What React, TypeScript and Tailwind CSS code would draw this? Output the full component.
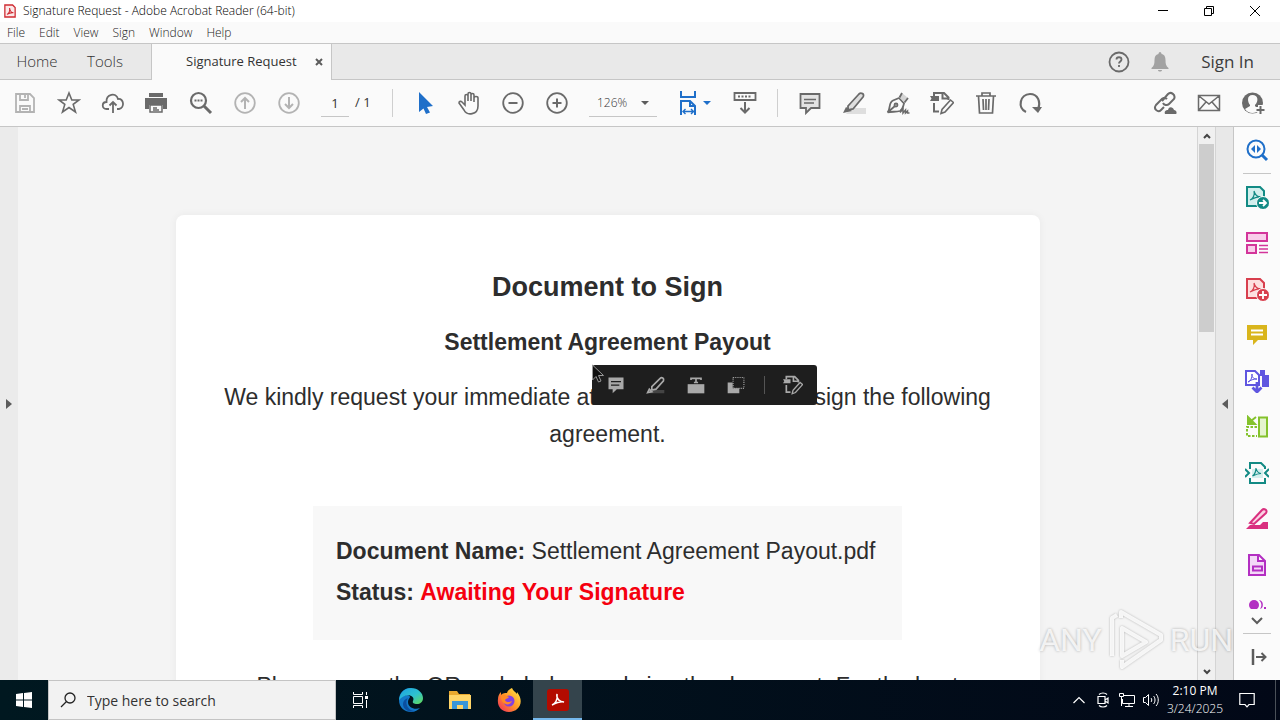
import { useState } from 'react'
import type { ReactNode } from 'react'

type IconProps = { children: ReactNode; className?: string }

function Icon({ children, className = 'h-6 w-6 text-[#6a6a6a]' }: IconProps) {
  return (
    <svg
      viewBox="0 0 24 24"
      fill="none"
      stroke="currentColor"
      strokeWidth="1.8"
      className={`shrink-0 ${className}`}
      aria-hidden="true"
    >
      {children}
    </svg>
  )
}

function ToolButton({ label, icon }: { label: string; icon: ReactNode }) {
  return (
    <button type="button" aria-label={label} className="flex h-11 w-11 shrink-0 items-center justify-center">
      {icon}
    </button>
  )
}

const muted = 'h-6 w-6 text-[#b3b3b3]'
const blue = 'h-6 w-6 text-[#1f6fc9]'

const stampPath = (
  <>
    <path d="M4 5V2h10l4.500 4.500V9M12.500 2v5.500H18M4 12v8.500h5" strokeWidth="2" />
    <path d="M0 5h9v5H0l1.500-2.500z" fill="currentColor" stroke="none" />
    <path d="M11 22.500l1-4L20.500 9l3 2.500L15 21z" strokeWidth="1.600" />
  </>
)

const pdfMark = <path d="M7.500 15c2-1.500 3.500-4.500 3.500-8 .5 3 2 5 5 5.500-3 0-5.500 1-8.500 2.500z" strokeWidth="1.200" />

function TitleBar() {
  return (
    <header className="flex h-[22px] items-center bg-white pl-1">
      <svg viewBox="0 0 14 16" className="h-4 w-3" fill="none" aria-hidden="true">
        <path d="M1 1h9l3 3v11H1z" fill="#fbe9e9" stroke="#cf2b32" strokeWidth="1.500" />
        <path d="M3.500 12c2-1 3.500-4 3-7.500C7 8 8.500 10 11 10c-3-.5-5 .5-7.500 2z" stroke="#cf2b32" strokeWidth="1.200" />
      </svg>
      <h1 className="ml-[7px] text-[12px] leading-4 font-light text-black">Signature Request - Adobe Acrobat Reader (64-bit)</h1>
      <div className="ml-auto flex pr-[2px] text-black">
        <button type="button" aria-label="Minimize" className="flex h-[22px] w-[46px] items-center justify-center">
          <svg viewBox="0 0 12 12" className="h-3 w-3" stroke="currentColor"><path d="M1 5.500h10" /></svg>
        </button>
        <button type="button" aria-label="Restore" className="flex h-[22px] w-[46px] items-center justify-center">
          <svg viewBox="0 0 12 12" className="h-3 w-3" stroke="currentColor" fill="none">
            <path d="M1.500 3.500h7v7h-7zM3.500 3V1.500h7v7H9" />
          </svg>
        </button>
        <button type="button" aria-label="Close" className="flex h-[22px] w-[46px] items-center justify-center">
          <svg viewBox="0 0 12 12" className="h-3 w-3" stroke="currentColor"><path d="M1 1l10 10M11 1L1 11" /></svg>
        </button>
      </div>
    </header>
  )
}

function MenuBar() {
  return (
    <nav className="flex h-[22px] items-center gap-[14px] border-b border-[#c6c6c6] bg-[#fafafa] pl-[7px] text-[12px] leading-4 font-light text-[#222]">
      {['File', 'Edit', 'View', 'Sign', 'Window', 'Help'].map((m) => (
        <button key={m} type="button">{m}</button>
      ))}
    </nav>
  )
}

function TabBar() {
  return (
    <div className="flex h-9 items-stretch border-b border-[#c6c6c6] bg-[#e9e9e9] text-[#333]">
      <button type="button" className="w-[74px] text-[15px] font-light">Home</button>
      <button type="button" className="w-[62px] text-[15px] font-light">Tools</button>
      <div className="-mb-px ml-[15px] flex w-[181px] items-center border-x border-[#c6c6c6] bg-[#fafafa] pl-[34px] text-[13px] text-[#333]">
        <span className="whitespace-nowrap">Signature Request</span>
        <button type="button" aria-label="Close tab" className="mr-2 ml-auto">
          <svg viewBox="0 0 8 8" className="h-2 w-2" stroke="#5c5c5c" strokeWidth="2"><path d="M1 1l6 6M7 1L1 7" /></svg>
        </button>
      </div>
      <div className="ml-auto flex items-center pr-[26px]">
        <button type="button" aria-label="Help">
          <Icon>
            <circle cx="12" cy="12" r="9.500" />
            <path d="M9.500 9.500c0-3 5-3 5 0 0 2-2.500 2-2.500 4M12 15v2" />
          </Icon>
        </button>
        <button type="button" aria-label="Notifications" className="ml-[17px]">
          <Icon className="h-6 w-6 text-[#a2a2a2]">
            <path d="M12 2c1 0 1.500 1 1.500 2 3 .5 4 3 4 6 0 4 .5 6 3 8v1h-17v-1c2.500-2 3-4 3-8 0-3 1-5.500 4-6 0-1 .5-2 1.500-2zM10 20h4c0 2-4 2-4 0z" fill="currentColor" stroke="none" />
          </Icon>
        </button>
        <button type="button" className="ml-[29px] text-[17px] text-[#3c3c3c]">Sign In</button>
      </div>
    </div>
  )
}

function Divider() {
  return <div className="h-7 w-px shrink-0 bg-[#cfcfcf]" />
}

function Toolbar() {
  const [page, setPage] = useState('1')

  return (
    <div className="flex h-[47px] items-center border-b border-[#c6c6c6] bg-[#fafafa] pr-[5px] pl-[3px] text-[12px] text-[#333]">
      <ToolButton label="Save" icon={
        <Icon className={muted}><path d="M3 3h14l4 4v14H3zM7 3v6h8V3M12 4v3M7 21v-6h10v6M9 18h6" /></Icon>
      } />
      <ToolButton label="Star" icon={
        <Icon><path d="M12 2l2.800 7H22l-5.800 4.400L18.500 21 12 16.500 5.500 21l2.300-7.600L2 9h7.200z" strokeWidth="1.600" /></Icon>
      } />
      <ToolButton label="Upload to cloud" icon={
        <Icon><path d="M8 18H5.500c-5 0-5-7 0-7C5 3 15 1 17 8c6-1 7 9 1 10h-2M12 22V11M8.500 14.500L12 11l3.500 3.500" /></Icon>
      } />
      <ToolButton label="Print" icon={
        <Icon>
          <path d="M4 2h14v4H4zM0 7h22v11h-4v-4H4v4H0z" fill="currentColor" stroke="none" />
          <path d="M5 14h12v7H5zM8 17h4M8 19h6" strokeWidth="1.500" />
        </Icon>
      } />
      <ToolButton label="Find" icon={
        <Icon><circle cx="9.500" cy="9.500" r="7.500" strokeWidth="2.200" /><path d="M15 15l7 7" strokeWidth="3" /><path d="M5.500 9.500h8" strokeWidth="2" strokeDasharray="2 1" /></Icon>
      } />
      <ToolButton label="Previous page" icon={
        <Icon className={muted}><circle cx="12" cy="12" r="9.800" /><path d="M12 18V7M8 11l4-4 4 4" strokeWidth="2" /></Icon>
      } />
      <ToolButton label="Next page" icon={
        <Icon className={muted}><circle cx="12" cy="12" r="9.800" /><path d="M12 6v11M8 13l4 4 4-4" strokeWidth="2" /></Icon>
      } />
      <input
        aria-label="Page number"
        value={page}
        onChange={(e) => setPage(e.target.value)}
        className="ml-[10px] h-7 w-7 shrink-0 border-b border-[#c6c6c6] bg-transparent text-center text-[13px] outline-none"
      />
      <span className="ml-[6px] w-[37px] text-[13px] whitespace-nowrap">/ 1</span>
      <Divider />
      <div className="ml-[10px] flex">
        <ToolButton label="Select" icon={
          <Icon className={blue}><path d="M6 1v20l4.500-3.500L13 23l4-1.500-3-5.500 6-1z" fill="currentColor" stroke="none" /></Icon>
        } />
        <ToolButton label="Hand" icon={
          <Icon>
            <path d="M8 14V5c0-2 3-2 3 0v5V3c0-2 3-2 3 0v7V4c0-2 3-2 3 0v7V7c0-2 4-2 4 0v8c0 9-11 10-14 4l-5-7c0-2 2-2 3-1z" strokeWidth="1.600" />
          </Icon>
        } />
        <ToolButton label="Zoom out" icon={<Icon><circle cx="12" cy="12" r="9.800" /><path d="M7.500 12h9" strokeWidth="2" /></Icon>} />
        <ToolButton label="Zoom in" icon={<Icon><circle cx="12" cy="12" r="9.800" /><path d="M7.500 12h9M12 7.500v9" strokeWidth="2" /></Icon>} />
      </div>
      <div className="relative ml-[10px] w-[68px] shrink-0">
        <select aria-label="Zoom level" className="h-7 w-full appearance-none border-b border-[#c6c6c6] bg-transparent pl-2 text-[12px] font-light outline-none">
          <option>126%</option>
        </select>
        <svg viewBox="0 0 8 4" className="pointer-events-none absolute top-3 right-2 h-1 w-2" fill="#5c5c5c"><path d="M0 0h8L4 4z" /></svg>
      </div>
      <button type="button" aria-label="Fit width" className="ml-[20px] flex w-[34px] shrink-0 items-center justify-between">
        <Icon className={blue}>
          <path d="M4 0v6h14V0M4 24V10h9l5 5v9M13 10v5h5" strokeWidth="2" />
          <path d="M6 20.500h11M8.500 18L6 20.500 8.500 23M14 18l2.500 2.500L14 23" strokeWidth="1.400" />
        </Icon>
        <svg viewBox="0 0 8 4" className="h-1 w-2" fill="#1f6fc9"><path d="M0 0h8L4 4z" /></svg>
      </button>
      <div className="ml-3 flex w-[54px] shrink-0">
        <ToolButton label="Show toolbar below" icon={
          <Icon><path d="M1.500 2h21v7h-21z" /><path d="M5 5.500h14" strokeDasharray="2 1.500" /><path d="M12 11v11M7.500 17l4.500 4.500 4.500-4.500" strokeWidth="2" /></Icon>
        } />
      </div>
      <Divider />
      <div className="ml-[10px] flex">
        <ToolButton label="Comment" icon={<Icon><path d="M2.500 3h19v14H13l-5 5v-5H2.500z" fill="#e3e3e3" /><path d="M6 8.500h12M6 12h10" strokeWidth="1.400" /></Icon>} />
        <ToolButton label="Highlight" icon={
          <Icon>
            <path d="M9 17h15v6H4z" fill="#dedede" stroke="none" />
            <path d="M6 15L17 3c2-2 6 0 4 3L11 18l-5 1z" fill="#dedede" />
            <path d="M4 16l6 4-9 2z" fill="currentColor" stroke="none" />
          </Icon>
        } />
        <ToolButton label="Fill and sign" icon={
          <Icon>
            <path d="M1.500 21.500C5 18 2 12 7 9.500l6-2.500 5 5.500c-1 3-1 6-4 7.500-4 1.500-9 0-12.500 1.500zM2 21l7-6" />
            <circle cx="10" cy="14" r="1.500" />
            <path d="M13 6l3-4 6 5-4 4z" fill="#d4d4d4" stroke="none" />
            <path d="M13.500 6.500L16 2M18.500 11.500L22 7" />
            <path d="M14 21.500l3-3.500v4l2.500-3v3l2-2v2h2" strokeWidth="1.500" />
          </Icon>
        } />
        <ToolButton label="Edit stamp" icon={<Icon>{stampPath}</Icon>} />
        <ToolButton label="Delete" icon={<Icon><path d="M2 5h20M8 5V2h8v3M4.500 5l1 17h13l1-17M9 8l.5 11M12 8v11M15 8l-.5 11" strokeWidth="1.700" /></Icon>} />
        <ToolButton label="Rotate" icon={<Icon><path d="M8 21C-1 17 2 3 12 3c8 0 11 8 8 15" strokeWidth="2.200" /><path d="M14 16l10 0-4 6z" fill="currentColor" stroke="none" /></Icon>} />
      </div>
      <div className="ml-auto flex">
        <ToolButton label="Share link" icon={
          <Icon>
            <path d="M9 10l6-7c3-3 8 1 6 5l-5 5c-2 2-5 1-6-1M14 8c-2-2-5-1-6 1l-5 5c-3 4 2 8 5 5l3-3" strokeWidth="2" />
            <path d="M12 23c-1-3 1-4 3-4 1-4 5-3 6 0 3 0 3 4 2 4z" fill="currentColor" stroke="none" />
          </Icon>
        } />
        <ToolButton label="Email" icon={<Icon><path d="M1.500 4.500h21v15h-21zM2 5l10 8L22 5M2 19l7-8M22 19l-7-8" strokeWidth="1.500" /></Icon>} />
        <ToolButton label="Add people" icon={
          <Icon>
            <circle cx="11.500" cy="12" r="10.500" fill="currentColor" stroke="none" />
            <path d="M11.500 4c-6 0-5 7-2.500 10v1l-5 3c3 5 11 5 14 1l-4-4v-1c4-4 3-10-2.500-10z" fill="#fafafa" stroke="none" />
            <path d="M19.500 14v9M15 18.500h9" stroke="#fafafa" strokeWidth="5" />
            <path d="M19.500 15v8M15.500 19h8" strokeWidth="2" />
          </Icon>
        } />
      </div>
    </div>
  )
}

function SelectionToolbar() {
  return (
    <div className="absolute top-[150px] left-[416px] flex h-10 w-[225px] items-center rounded-[3px] bg-[#1e1e1e] pl-1 text-[#a9a9a9]">
      <button type="button" aria-label="Add note" className="flex w-10 justify-center">
        <Icon className="h-5 w-5"><path d="M3 3h18v14h-8l-5 5v-5H3z" fill="currentColor" stroke="none" /><path d="M6 8h12M6 12h10" stroke="#1e1e1e" strokeWidth="1.500" /></Icon>
      </button>
      <button type="button" aria-label="Highlight text" className="flex w-10 justify-center">
        <Icon className="h-5 w-5"><path d="M8 18h14v4H4z" fill="#444" stroke="none" /><path d="M7 14L17 4c2-2 5 0 4 3L12 17l-5 1zM4 17l3 3-5 1z" strokeWidth="2" /></Icon>
      </button>
      <button type="button" aria-label="Redact" className="flex w-10 justify-center">
        <Icon className="h-5 w-5"><path d="M2 11h20v11H2z" fill="currentColor" stroke="none" /><path d="M6 6V4h12v2M12 4v5M9.500 9h5" strokeWidth="2" /></Icon>
      </button>
      <button type="button" aria-label="Copy area" className="flex w-10 justify-center">
        <Icon className="h-5 w-5"><path d="M2 9h6v7h8v6H2z" fill="currentColor" stroke="none" /><path d="M8.500 3h13v13h-13z" strokeDasharray="1.300 1.300" strokeWidth="1.300" /></Icon>
      </button>
      <div className="ml-2 h-[18px] w-px bg-[#555]" />
      <button type="button" aria-label="Edit text" className="ml-2 flex w-10 justify-center">
        <Icon className="h-5 w-5">{stampPath}</Icon>
      </button>
      <svg viewBox="0 0 12 19" className="absolute -top-px left-0 h-[19px] w-3" aria-hidden="true">
        <path d="M.5 1v15l3.500-3.500L6.500 18l2.500-1-2.500-5.500h5z" fill="#111" stroke="#999" strokeWidth="1" />
      </svg>
    </div>
  )
}

function PdfPage() {
  return (
    <article className="relative mx-auto mt-[88px] h-[640px] w-[864px] rounded-lg bg-white text-center font-['Liberation_Sans',Arial,sans-serif] text-[23px] leading-[37px] text-[#2d2d2d] shadow-[0_0_8px_rgba(0,0,0,0.05)]">
      <h2 className="pt-[54px] text-[27px] leading-[37px] font-bold">Document to Sign</h2>
      <h3 className="mt-[18px] font-bold">Settlement Agreement Payout</h3>
      <p className="mt-[18px] px-[42px]">
        We kindly request your immediate attention to review and sign the following agreement.
      </p>
      <div className="mx-auto mt-[53px] flex h-[134px] w-[589px] flex-col gap-1 bg-[#f8f8f8] px-[23px] pt-[27px] text-left whitespace-nowrap">
        <p><strong>Document Name:</strong> Settlement Agreement Payout.pdf</p>
        <p><strong>Status:</strong> <strong className="text-[#f5000f]">Awaiting Your Signature</strong></p>
      </div>
      <p className="mt-7 whitespace-nowrap">Please scan the QR code below and sign the document. For the best</p>
      <SelectionToolbar />
    </article>
  )
}

function PdfSheet({ fill }: { fill: string }) {
  return (
    <>
      <path d="M2 2h13l4 4v15H2z" fill={fill} strokeWidth="2" />
      <path d="M5 15c3-1 5-5 4-9 1 4 3 6 7 6-4-.5-7 1-11 3z" strokeWidth="1.200" />
    </>
  )
}

const sideTools = [
  { label: 'Export PDF', color: 'h-6 w-6 text-[#128a84]', art: (
    <><PdfSheet fill="#d3efed" /><circle cx="18" cy="18" r="6.500" fill="currentColor" stroke="#fbfbfb" strokeWidth="1" /><path d="M14 18h7M18 15l3 3-3 3" stroke="#fff" /></>
  ) },
  { label: 'Organize pages', color: 'h-6 w-6 text-[#d3359a]', art: (
    <><path d="M2 2h20v8H2zM2 14h9v8H2z" fill="#f9cdea" strokeWidth="2" /><path d="M14 14.500h9M14 18h9M14 21.500h9" strokeWidth="1.300" /></>
  ) },
  { label: 'Create PDF', color: 'h-6 w-6 text-[#d83f4e]', art: (
    <><PdfSheet fill="#fde0e0" /><circle cx="18" cy="18" r="6.500" fill="currentColor" stroke="#fbfbfb" strokeWidth="1" /><path d="M14 18h8M18 14v8" stroke="#fff" /></>
  ) },
  { label: 'Comment', color: 'h-6 w-6 text-[#d9b51c]', art: (
    <><path d="M2 2h20v15h-9l-5 5v-5H2z" fill="currentColor" stroke="none" /><path d="M6 7.500h12M6 11.500h12" stroke="#fff" strokeWidth="2" /></>
  ) },
  { label: 'Combine files', color: 'h-6 w-6 text-[#5f56e0]', art: (
    <><path d="M1 2h9l4 4v10H1z" fill="#fff" strokeWidth="2" /><path d="M3 13c3-1 4-4 4-8 0 4 2 5 5 5-4 0-6 1-9 3z" strokeWidth="1" /><path d="M15 1h5v5h5v12h-8V7h-2z" fill="currentColor" stroke="none" /><path d="M12 13v9M7.500 18.500L12 23l4.500-4.500" strokeWidth="2.800" /></>
  ) },
  { label: 'Compress pages', color: 'h-6 w-6 text-[#84c22c]', art: (
    <><path d="M14 2.500h8v19h-8z" fill="#e5f4cf" strokeWidth="2" /><path d="M12 12H2v9h10" strokeWidth="2" strokeDasharray="2.500 1.500" /><path d="M3 2v7h7zM6 6l5-4" fill="currentColor" strokeWidth="2" /></>
  ) },
  { label: 'Compress PDF', color: 'h-6 w-6 text-[#128a84]', art: (
    <><path d="M5 8V2h11l4 4v2M5 17v5h15v-5" strokeWidth="2" /><path d="M7 8h11v9H7z" fill="#d3efed" stroke="none" />{pdfMark}<path d="M0 8l4 4-4 4M24 8l-4 4 4 4" strokeWidth="2" /></>
  ) },
  { label: 'Redact', color: 'h-6 w-6 text-[#d9307f]', art: (
    <><path d="M1 22l4-4h10l3-3h5v7z" fill="currentColor" stroke="none" /><path d="M5 16L17 3c2-2 6 0 4 3L9 17z" fill="#fbd3e4" strokeWidth="2" /></>
  ) },
  { label: 'Fill and sign', color: 'h-6 w-6 text-[#b32fc2]', art: (
    <><path d="M4 2h10l6 6v14H4zM13 2v6h7" fill="#f3d8f7" strokeWidth="2" /><path d="M8 13.500h9v4H8z" strokeWidth="2" /></>
  ) },
]

function ToolRail() {
  return (
    <aside className="flex w-[47px] shrink-0 flex-col items-center border-l border-[#c6c6c6] bg-[#fbfbfb]">
      <button type="button" aria-label="Search tools" className="flex h-[46px] w-full shrink-0 items-center justify-center">
        <Icon className={blue}><circle cx="11" cy="11" r="8.500" strokeWidth="2" /><path d="M17 17l5 5" strokeWidth="3" /><path d="M10 7v8l-4-4zM12 7v8l4-4z" fill="currentColor" stroke="none" /></Icon>
      </button>
      <div className="h-px w-7 shrink-0 bg-[#c6c6c6]" />
      {sideTools.map((t) => (
        <button key={t.label} type="button" aria-label={t.label} className="flex h-[46px] w-full shrink-0 items-center justify-center">
          <Icon className={t.color}>{t.art}</Icon>
        </button>
      ))}
      <button type="button" aria-label="Stamp" className="flex min-h-0 flex-1 items-end overflow-hidden">
        <svg viewBox="0 0 20 10" className="h-[10px] w-5" fill="#b32fc2">
          <circle cx="7" cy="6" r="5" />
          <path d="M12 1c5 0 5 9 1 9 2-3 2-6-1-9zM17 8h2v2h-2z" />
        </svg>
      </button>
      <button type="button" aria-label="More tools" className="flex h-6 w-full shrink-0 items-center justify-center">
        <svg viewBox="0 0 12 8" className="h-2 w-3" fill="none" stroke="#5c5c5c" strokeWidth="2"><path d="M1 1l5 5 5-5" /></svg>
      </button>
      <div className="h-px w-7 shrink-0 bg-[#c6c6c6]" />
      <button type="button" aria-label="Collapse pane" className="flex h-[46px] w-full shrink-0 items-center justify-center">
        <svg viewBox="0 0 16 16" className="ml-1 h-4 w-4" fill="none" stroke="#5c5c5c" strokeWidth="2"><path d="M2 0v16" strokeWidth="2.500" /><path d="M5 8h9M10.500 4l4 4-4 4" /></svg>
      </button>
    </aside>
  )
}

function Watermark() {
  return (
    <div className="pointer-events-none absolute right-[47px] bottom-2 flex h-16 items-center gap-[6px] font-['Roboto','Liberation_Sans',sans-serif] text-[32px] leading-9 text-white/80 [text-shadow:0_0_3px_rgba(0,0,0,0.3)]">
      <span>ANY</span>
      <svg viewBox="0 0 56 64" className="h-16 w-14 drop-shadow-[0_0_1px_rgba(0,0,0,0.3)]" fill="none" stroke="white" strokeOpacity=".85" strokeWidth="4" strokeLinejoin="round" aria-hidden="true">
        <path d="M4 48V10l5-3M14 20v28l24-14zM13 10V4l40 23v5L14 59v-7" />
      </svg>
      <span>RUN</span>
    </div>
  )
}

function DocumentView() {
  return (
    <main className="relative flex min-h-0 flex-1">
      <button type="button" aria-label="Show navigation pane" className="flex w-[18px] shrink-0 items-center justify-center bg-[#ebebeb]">
        <svg viewBox="0 0 6 10" className="h-[10px] w-[6px]" fill="#5c5c5c"><path d="M0 0v10l6-5z" /></svg>
      </button>
      <div className="min-w-0 flex-1 overflow-hidden bg-[#f4f4f4]">
        <PdfPage />
      </div>
      <div className="flex w-[19px] shrink-0 flex-col items-center border-x border-[#d4d4d4] bg-[#f0f0f0]">
        <button type="button" aria-label="Scroll up" className="flex h-[17px] items-center">
          <svg viewBox="0 0 8 6" className="h-[6px] w-2" fill="none" stroke="#444" strokeWidth="2"><path d="M1 5l3-3 3 3" /></svg>
        </button>
        <div className="h-[188px] w-[15px] bg-[#cdcdcd]" />
        <button type="button" aria-label="Scroll down" className="mt-auto flex h-[17px] items-center">
          <svg viewBox="0 0 8 6" className="h-[6px] w-2" fill="none" stroke="#444" strokeWidth="2"><path d="M1 1l3 3 3-3" /></svg>
        </button>
      </div>
      <button type="button" aria-label="Hide tools pane" className="flex w-[17px] shrink-0 items-center justify-center bg-[#e8e8e8]">
        <svg viewBox="0 0 6 10" className="h-[10px] w-[6px]" fill="#5c5c5c"><path d="M6 0v10L0 5z" /></svg>
      </button>
      <ToolRail />
      <Watermark />
    </main>
  )
}

function TaskButton({ label, active, children }: { label: string; active?: boolean; children: ReactNode }) {
  return (
    <button
      type="button"
      aria-label={label}
      className={`flex w-[49px] items-center justify-center ${active ? 'border-b-2 border-[#76b9ed] bg-[#34444c]' : ''}`}
    >
      {children}
    </button>
  )
}

function Taskbar() {
  return (
    <footer className="flex h-10 shrink-0 items-stretch bg-gradient-to-r from-[#001820] to-[#020817] text-white">
      <button type="button" aria-label="Start" className="flex w-12 items-center justify-center">
        <svg viewBox="0 0 16 16" className="h-4 w-4" fill="white"><path d="M0 2l7-1v6.500H0zM8 1l8-1v7.500H8zM0 8.500h7V15l-7-1zM8 8.500h8V16l-8-1z" /></svg>
      </button>
      <label className="flex w-72 items-center border border-[#c4c4c4] bg-[#f2f2f2] pl-[11px] text-[#222]">
        <svg viewBox="0 0 16 16" className="h-4 w-4 shrink-0" fill="none" stroke="#222" strokeWidth="1.300"><circle cx="10" cy="6" r="5" /><path d="M6.500 9.500L1 15" /></svg>
        <input aria-label="Search" placeholder="Type here to search" className="ml-[11px] w-full bg-transparent text-[14px] outline-none placeholder:text-[#333]" />
      </label>
      <button type="button" aria-label="Task view" className="flex w-12 items-center justify-center">
        <svg viewBox="0 0 18 18" className="h-[18px] w-[18px]" fill="none" stroke="white">
          <path d="M2.500 1v2.500h9V1M2.500 5.500h9v7h-9zM2.500 17v-2.500h9V17M15.500 1v3M15.500 9v8" /><path d="M14 5h3v3h-3z" fill="white" stroke="none" />
        </svg>
      </button>
      <div className="flex pl-[2px]">
        <TaskButton label="Microsoft Edge">
          <svg viewBox="0 0 24 24" className="h-6 w-6">
            <defs>
              <linearGradient id="edgeTop" x1="0" y1="0" x2="1" y2="1"><stop stopColor="#1ba0e4" /><stop offset=".55" stopColor="#2fc2ce" /><stop offset="1" stopColor="#66dc52" /></linearGradient>
            </defs>
            <path d="M12 0C4 0 0 6 0 12c0 8 6 12 12 12 4 0 7-2 9-4-5 2-12 0-12-6 0-3 2-4 2-5 0-3-8-3-11 3z" fill="#1378c8" />
            <path d="M0 12C1 4 6 0 12 0c7 0 12 5 12 10 0 4-3 6-6 6s-5-1-4-3C17 7 6 4 0 12z" fill="url(#edgeTop)" />
            <path d="M9 10c-4 5 0 13 7 13-5 2-12-1-12-7 0-3 2-5 5-6z" fill="#0b4f9f" />
          </svg>
        </TaskButton>
        <TaskButton label="File Explorer">
          <svg viewBox="0 0 24 24" className="h-6 w-6"><path d="M1 3h8l2 3h11v15H1z" fill="#e9a92f" /><path d="M1 7h22v14H1z" fill="#ffd568" /><path d="M4 21v-8h16v8h-5v-4H9v4z" fill="#3a96d8" /></svg>
        </TaskButton>
        <TaskButton label="Firefox">
          <svg viewBox="0 0 24 24" className="h-6 w-6">
            <defs><linearGradient id="fox" x1="1" y1="0" x2="0" y2="1"><stop stopColor="#fff14a" /><stop offset=".5" stopColor="#ff9727" /><stop offset="1" stopColor="#f0245f" /></linearGradient></defs>
            <path d="M15 0c1 3 4 4 5 6V4c8 10 2 20-8 20C4 24 0 18 1 11c0-3 1-5 3-7v3c2-2 4-2 6-2 1-3 3-4 5-5z" fill="url(#fox)" />
            <circle cx="12" cy="13" r="5.500" fill="#8340e0" />
            <path d="M4 7c4-1 5 1 8 2-1 2-3 1-4 3 1 3 5 2 7 1-2 6-12 4-11-6z" fill="#ff8a24" />
          </svg>
        </TaskButton>
        <TaskButton label="Adobe Acrobat Reader" active>
          <svg viewBox="0 0 22 22" className="mt-[2px] h-[22px] w-[22px]"><rect width="22" height="22" rx="3" fill="#b30b00" /><path d="M5 16c3-1 6-5 5-11-1 5 3 8 7 8-4-1-8 1-12 3z" fill="none" stroke="white" strokeWidth="1.500" /></svg>
        </TaskButton>
      </div>
      <div className="ml-auto flex items-center">
        <div className="flex gap-2">
          <svg viewBox="0 0 16 16" className="h-4 w-4" fill="none" stroke="white" strokeWidth="1.200"><path d="M2.500 11L8 5.500l5.500 5.500" /></svg>
          <svg viewBox="0 0 16 16" className="h-4 w-4" fill="none" stroke="white" strokeWidth="1.200"><path d="M3 4.500h7v7H3zM10 8l3-2v5l-3-2M4 2.500c2-2 6-2 8 0M4 13.500c2 2 6 2 8 0" /></svg>
          <svg viewBox="0 0 16 16" className="h-4 w-4" fill="none" stroke="white"><path d="M5 3.500h10.500v8H3.500V7M10 12v2.500M6 14.500h8M.5 1.500h4v3h-4zM2.500 5v9" /></svg>
          <svg viewBox="0 0 16 16" className="h-4 w-4" fill="none" stroke="white"><path d="M.5 5.500h2l3-3v11l-3-3h-2zM8 6c1 1 1 3 0 4M10.500 4c2 2 2 6 0 8M13 2c3 3 3 9 0 12" /></svg>
        </div>
        <div className="w-[72px] text-center text-[12px] leading-[18px]">
          <div>2:10 PM</div>
          <div className="font-light">3/24/2025</div>
        </div>
        <button type="button" aria-label="Notifications" className="ml-2">
          <svg viewBox="0 0 16 16" className="h-4 w-4" fill="none" stroke="white" strokeWidth="1.200"><path d="M.8 1.500h14.400v11H10L8 14.800l-2-2.300H.8z" /></svg>
        </button>
        <div className="mr-1 ml-5 h-10 w-px bg-[#4a5058]" />
      </div>
    </footer>
  )
}

export default function App() {
  return (
    <div className="flex h-screen flex-col overflow-hidden font-['Open_Sans','Noto_Sans',sans-serif]">
      <TitleBar />
      <MenuBar />
      <TabBar />
      <Toolbar />
      <DocumentView />
      <Taskbar />
    </div>
  )
}
